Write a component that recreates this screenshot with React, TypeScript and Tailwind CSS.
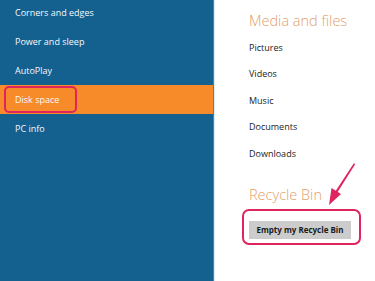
const leftItems = ["Corners and edges", "Power and sleep", "AutoPlay", "Disk space", "PC info"];
const mediaItems = ["Pictures", "Videos", "Music", "Documents", "Downloads"];

const App = () => {
    return (
        <div
            className="flex w-[375px] h-[281px] overflow-hidden bg-white"
            style={{ fontFamily: '"Open Sans", "Noto Sans", sans-serif' }}
        >
            <div className="w-[214px] h-full bg-[#14608f] border-r border-[#5d7f96]">
                <ul className="-mt-[2px]">
                    {leftItems.map((item) => {
                        const selected = item === "Disk space";
                        return (
                            <li
                                key={item}
                                className={`relative h-[29px] flex items-center pl-[15px] text-[9px] text-[#f4f8fb] ${
                                    selected ? "bg-[#f78b2a]" : ""
                                }`}
                            >
                                {item}
                                {selected && (
                                    <span className="absolute left-[4px] top-[1px] w-[73px] h-[27px] rounded-[5px] border-2 border-[#e0245e]" />
                                )}
                            </li>
                        );
                    })}
                </ul>
            </div>

            <div className="relative flex-1 h-full border-l border-[#d8eefa] pl-[34px] pt-[11px]">
                <h2 className="text-[14.5px] leading-[20px] font-light text-[#e3a06c]">Media and files</h2>
                <ul className="mt-[3px]">
                    {mediaItems.map((item) => (
                        <li key={item} className="h-[26.5px] flex items-center text-[9px] text-[#222]">
                            {item}
                        </li>
                    ))}
                </ul>
                <h2 className="mt-[18px] text-[14.5px] leading-[20px] font-light text-[#e3a06c]">Recycle Bin</h2>
                <div className="relative mt-[10px] inline-block">
                    <button className="w-[102px] h-[18px] bg-[#cccccc] text-[8px] font-bold text-[#1a1a1a]">
                        Empty my Recycle Bin
                    </button>
                    <span className="absolute -left-[7px] -right-[10px] -top-[6px] -bottom-[6px] rounded-[7px] border-2 border-[#e0245e]" />
                </div>

                {/* annotation arrow */}
                <svg
                    className="absolute left-0 top-0"
                    width="160"
                    height="281"
                    viewBox="0 0 160 281"
                >
                    <path d="M139 163 L140 164.5 L122 193 L120 192 Z" fill="#e0245e" />
                    <path d="M114 205 L116.5 188 L126 194 Z" fill="#e0245e" />
                </svg>
            </div>
        </div>
    );
};

export default App;
